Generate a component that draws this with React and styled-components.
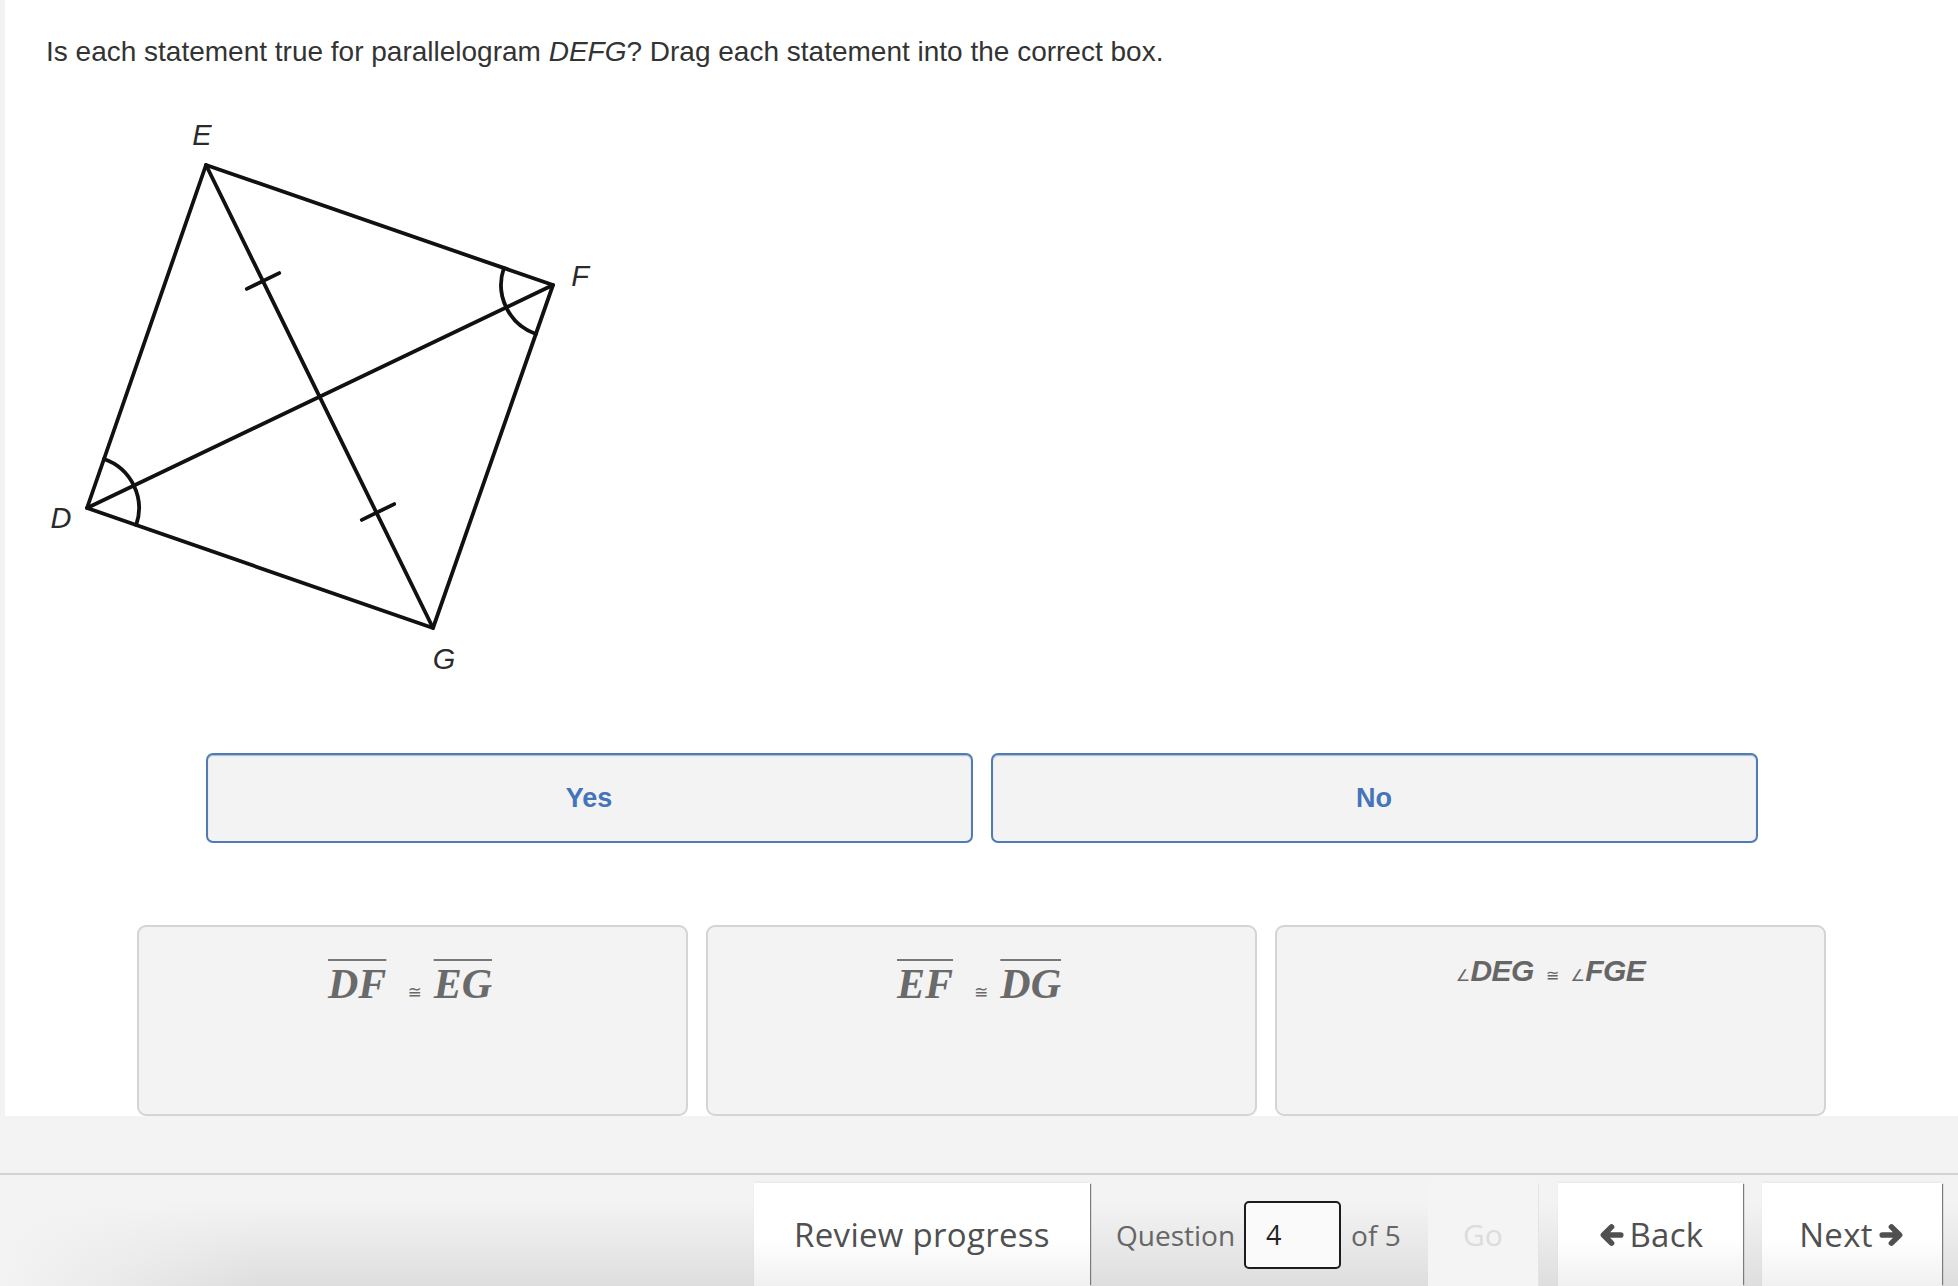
import React from 'react';
import styled, { createGlobalStyle } from 'styled-components';

const GlobalStyle = createGlobalStyle`
  html, body {
    margin: 0;
    padding: 0;
    background: #f2f2f2;
  }
  body {
    font-family: "Liberation Sans", Arial, sans-serif;
  }
`;

const Page = styled.div`
  display: flex;
  flex-direction: column;
  height: 1286px;
  overflow: hidden;
`;

const Panel = styled.main`
  display: flex;
  flex-direction: column;
  height: 1116px;
  margin-left: 5px;
  padding-top: 36px;
  box-sizing: border-box;
  background: #fff;
  overflow: hidden;
`;

const Prompt = styled.p`
  margin: 0;
  padding-left: 41px;
  font-size: 28px;
  line-height: 32px;
  color: #333;
`;

const Figure = styled.svg`
  display: block;
  margin: 42px 0 0 30px;
  flex-shrink: 0;
`;

const ZoneRow = styled.div`
  display: flex;
  gap: 18px;
  width: 1552px;
  margin: 63px auto 0;
`;

const Zone = styled.div`
  flex: 1;
  height: 90px;
  box-sizing: border-box;
  display: flex;
  align-items: center;
  justify-content: center;
  border: 2px solid #4f7cb4;
  border-radius: 7px;
  background: #f3f3f3;
  box-shadow: inset 0 1px 1px rgba(40, 80, 140, 0.35);
  font-size: 27px;
  font-weight: 700;
  color: #4474b9;
`;

const CardRow = styled.div`
  display: flex;
  gap: 18px;
  width: 1689px;
  margin: 82px auto 0;
`;

const Card = styled.div`
  flex: 1;
  height: 191px;
  box-sizing: border-box;
  display: flex;
  justify-content: center;
  padding-top: ${(p) => p.$pad}px;
  border: 2px solid #d4d4d4;
  border-radius: 9px;
  background: #f3f3f3;
  color: #6a6a6a;
`;

const SegmentLine = styled.div`
  display: flex;
  align-items: baseline;
  font-family: "Liberation Serif", "Times New Roman", serif;
  font-style: italic;
  font-weight: 700;
  font-size: 42px;
  line-height: 46px;
`;

const Seg = styled.span`
  text-decoration: overline;
  text-decoration-thickness: 2px;
  text-decoration-color: #777;
  padding-right: 5px;
`;

const Cong = styled.span`
  font-family: "DejaVu Sans", sans-serif;
  font-style: normal;
  font-weight: 400;
  font-size: ${(p) => p.$size || 17}px;
  margin: 0 ${(p) => p.$gap || 10}px 0 ${(p) => p.$left || 20}px;
`;

const AngleLine = styled.div`
  display: flex;
  align-items: baseline;
  font-family: "Liberation Sans", Arial, sans-serif;
  font-style: italic;
  font-weight: 700;
  font-size: 30px;
  line-height: 34px;
  letter-spacing: -0.6px;
  color: #666;
`;

const AngleSym = styled.span`
  font-family: "DejaVu Sans", sans-serif;
  font-style: normal;
  font-weight: 400;
  font-size: 16px;
  margin-right: 1px;
`;

const Footer = styled.footer`
  flex: 1;
  display: flex;
  flex-direction: column;
`;

const FooterGap = styled.div`
  height: 57px;
  border-bottom: 2px solid #d3d3d3;
  background: #f3f3f3;
`;

const NavBar = styled.nav`
  flex: 1;
  display: flex;
  justify-content: flex-end;
  align-items: flex-start;
  padding: 8px 16px 0 0;
  background:
    linear-gradient(to right, #f3f3f3 0, rgba(243, 243, 243, 0) 260px),
    linear-gradient(to bottom, #f3f3f3 25%, #dedede 100%);
  font-family: "Open Sans", "Noto Sans", sans-serif;
  color: #555;
`;

const NavButton = styled.button`
  width: ${(p) => p.$w}px;
  height: 103px;
  box-sizing: border-box;
  margin-left: ${(p) => p.$ml || 0}px;
  display: flex;
  align-items: center;
  justify-content: center;
  gap: 6px;
  padding: 0;
  border: none;
  background: linear-gradient(to bottom, #fff 55%, #f0f0f0 100%);
  box-shadow: 2px 0 1px -1px #7a7a7a, 0 -1px 2px rgba(0, 0, 0, 0.05);
  font-family: inherit;
  font-size: 33px;
  letter-spacing: 0.3px;
  color: #505050;
  cursor: pointer;
`;

const QuestionGroup = styled.div`
  width: 338px;
  height: 103px;
  box-sizing: border-box;
  display: flex;
  align-items: center;
  padding-left: 26px;
  font-size: 28px;
  color: #666;
`;

const PageInput = styled.input`
  width: 97px;
  height: 68px;
  box-sizing: border-box;
  margin: 0 10px 0 9px;
  padding: 0 0 0 20px;
  border: 2px solid #1c1c1c;
  border-radius: 5px;
  background: #fafafa;
  font-family: "Open Sans", sans-serif;
  font-size: 27px;
  color: #222;
`;

const GoButton = styled.button`
  width: 111px;
  height: 103px;
  padding: 0;
  border: none;
  border-right: 1px solid #e4e4e4;
  background: #f4f4f4;
  font-family: inherit;
  font-size: 30px;
  color: #dcdcdc;
`;

const Arrow = styled.svg`
  width: 26px;
  height: 26px;
  flex-shrink: 0;
`;

function ArrowIcon({ dir }) {
  const d = dir === 'left'
    ? 'M21 12 H6 M12.5 4.5 L5 12 L12.5 19.5'
    : 'M3 12 H18 M11.5 4.5 L19 12 L11.5 19.5';
  return (
    <Arrow viewBox="0 0 24 24">
      <path d={d} fill="none" stroke="currentColor" strokeWidth="5.2" strokeLinecap="round" strokeLinejoin="round" />
    </Arrow>
  );
}

function Diagram() {
  const E = [171, 55];
  const F = [518, 175];
  const G = [398, 518];
  const D = [52, 398];
  const line = (a, b) => `M${a[0]} ${a[1]} L${b[0]} ${b[1]}`;
  return (
    <Figure width="600" height="580" viewBox="0 0 600 580">
      <g stroke="#111" strokeWidth="3.8" fill="none" strokeLinejoin="round" strokeLinecap="round">
        <path d={`${line(D, E)} ${line(E, F)} ${line(F, G)} ${line(G, D)}`} />
        <path d={`${line(D, F)} ${line(E, G)}`} />
        <path d="M211.8 178.9 L244.2 163.1 M326.8 409.9 L359.2 394.1" />
        <path d="M69 349 A52 52 0 0 1 101.2 415" />
        <path d="M468.9 158 A52 52 0 0 0 501 224" />
      </g>
      <g fontFamily="Liberation Sans, Arial, sans-serif" fontStyle="italic" fontSize="29" fill="#2a2a2a" textAnchor="middle" dominantBaseline="central">
        <text x="167" y="25">E</text>
        <text x="545" y="166">F</text>
        <text x="26" y="408">D</text>
        <text x="409" y="549">G</text>
      </g>
    </Figure>
  );
}

function SegmentStatement({ left, right }) {
  return (
    <SegmentLine>
      <Seg>{left}</Seg>
      <Cong $left={16} $gap={12}>≅</Cong>
      <Seg>{right}</Seg>
    </SegmentLine>
  );
}

export default function App() {
  return (
    <Page>
      <GlobalStyle />
      <Panel>
        <Prompt>
          Is each statement true for parallelogram <i>DEFG</i>? Drag each statement into the correct box.
        </Prompt>
        <Diagram />
        <ZoneRow>
          <Zone>Yes</Zone>
          <Zone>No</Zone>
        </ZoneRow>
        <CardRow>
          <Card $pad={34}>
            <SegmentStatement left="DF" right="EG" />
          </Card>
          <Card $pad={34}>
            <SegmentStatement left="EF" right="DG" />
          </Card>
          <Card $pad={27}>
            <AngleLine>
              <AngleSym>∠</AngleSym>DEG
              <Cong $left={12} $gap={12} $size={16}>≅</Cong>
              <AngleSym>∠</AngleSym>FGE
            </AngleLine>
          </Card>
        </CardRow>
      </Panel>
      <Footer>
        <FooterGap />
        <NavBar>
          <NavButton $w={336}>Review progress</NavButton>
          <QuestionGroup>
            Question
            <PageInput defaultValue="4" />
            of 5
          </QuestionGroup>
          <GoButton disabled>Go</GoButton>
          <NavButton $w={185} $ml={19}>
            <ArrowIcon dir="left" />
            Back
          </NavButton>
          <NavButton $w={180} $ml={19}>
            Next
            <ArrowIcon dir="right" />
          </NavButton>
        </NavBar>
      </Footer>
    </Page>
  );
}
